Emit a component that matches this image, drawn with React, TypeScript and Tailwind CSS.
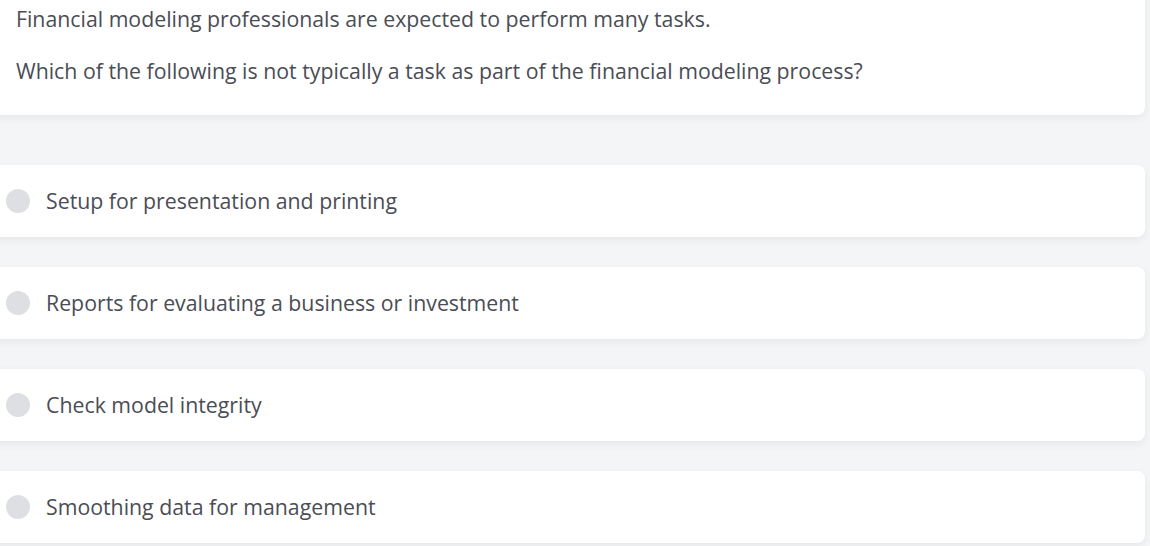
import React from "react";

const options = [
  "Setup for presentation and printing",
  "Reports for evaluating a business or investment",
  "Check model integrity",
  "Smoothing data for management",
];

export default function App() {
  return (
    <div
      className="w-[1150px] h-[546px] overflow-hidden bg-[#f4f5f7] text-[#4a4d55]"
      style={{ fontFamily: '"Open Sans", "Noto Sans", sans-serif' }}
    >
      <div className="-ml-[20px] mr-[5px] -mt-[20px] flex flex-col">
        <div className="bg-white rounded-[8px] shadow-[0_3px_8px_rgba(0,0,0,0.06)] pl-[36px] pt-[25px] pb-[30px] text-[21.3px] leading-[28px]">
          <p>Financial modeling professionals are expected to perform many tasks.</p>
          <p className="mt-[24px]">Which of the following is not typically a task as part of the financial modeling process?</p>
        </div>
        <div className="mt-[50px] flex flex-col gap-[30px]">
          {options.map((o) => (
            <div
              key={o}
              className="h-[72px] bg-white rounded-[8px] shadow-[0_3px_8px_rgba(0,0,0,0.06)] flex items-center pl-[26px]"
            >
              <span className="w-[24px] h-[24px] rounded-full bg-[#dedfe2] shrink-0" />
              <span className="ml-[16px] text-[21.3px] leading-[28px]">{o}</span>
            </div>
          ))}
        </div>
      </div>
    </div>
  );
}
